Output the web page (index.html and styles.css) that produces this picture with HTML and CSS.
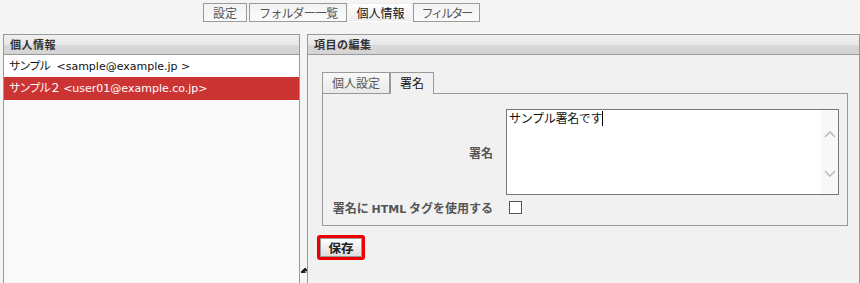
FILE: index.html
```html
<!DOCTYPE html>
<html lang="ja">
<head>
<meta charset="utf-8">
<title>個人情報</title>
<link rel="stylesheet" href="styles.css">
</head>
<body>
<nav class="topnav">
  <a class="ttab">設定</a>
  <a class="ttab kana">フォルダー一覧</a>
  <a class="ttab active">個人情報</a>
  <a class="ttab kana2">フィルター</a>
</nav>
<main class="main">
  <section class="panel left">
    <header class="phead">個人情報</header>
    <ul class="list">
      <li class="item"><span class="nm">サンプル</span>&nbsp; &lt;sample@example.jp &gt;</li>
      <li class="item sel"><span class="nm">サンプル２</span> &lt;user01@example.co.jp&gt;</li>
    </ul>
  </section>
  <div class="splitter">
    <svg class="grip" width="6" height="5" viewBox="0 0 6 5"><path d="M0 5V3h1V2h1V1h1V0h2v1h1v2H4v2z" fill="#222"/><path d="M4 3h2v2H4z" fill="#aaa"/></svg>
  </div>
  <section class="panel right">
    <header class="phead">項目の編集</header>
    <div class="pbody">
      <div class="itabs">
        <a class="itab">個人設定</a>
        <a class="itab active">署名</a>
      </div>
      <div class="ibox">
        <div class="form">
          <label class="lbl sig">署名</label>
          <div class="ta">
            <div class="ta-text">サンプル署名です<span class="caret"></span></div>
            <div class="ta-scroll">
              <svg width="12" height="8" viewBox="0 0 12 8"><path d="M1 7l5-5 5 5" fill="none" stroke="#bdbdbd" stroke-width="1.6"/></svg>
              <svg width="12" height="8" viewBox="0 0 12 8"><path d="M1 1l5 5 5-5" fill="none" stroke="#bdbdbd" stroke-width="1.6"/></svg>
            </div>
          </div>
          <label class="lbl">署名に <b class="html">HTML</b> タグを使用する</label>
          <div class="cbcell"><span class="cb"></span></div>
        </div>
      </div>
      <div class="savewrap"><button class="save">保存</button></div>
    </div>
  </section>
</main>
</body>
</html>
```
FILE: styles.css
```css
* { box-sizing: border-box; }
html, body { margin: 0; padding: 0; }
body {
  width: 860px;
  height: 283px;
  overflow: hidden;
  background: #f4f4f4;
  font-family: "DejaVu Sans", "Noto Sans CJK JP", sans-serif;
  font-size: 12px;
  color: #222;
}
.topnav {
  display: flex;
  gap: 2px;
  padding: 3px 0 0 203px;
  height: 34px;
}
.ttab {
  height: 19px;
  padding: 0 9px;
  border: 1px solid #9a9a9a;
  background: linear-gradient(#f2f2f2, #fbfbfb);
  color: #555;
  font-size: 12px;
  line-height: 17px;
  font-family: "Noto Sans CJK JP", sans-serif;
}
.ttab.kana { letter-spacing: -0.8px; }
.ttab.kana2 { letter-spacing: -2px; padding: 0 8px 0 7px; }
.ttab.active {
  border-color: transparent;
  background: linear-gradient(#ffffff, #ececec);
  color: #111;
  padding: 0 6px;
}
.main {
  display: flex;
  padding-left: 3px;
  height: 249px;
}
.panel {
  border: 1px solid #999;
  border-bottom: none;
  display: flex;
  flex-direction: column;
}
.left { width: 297px; background: #f9f9f9; }
.right { width: 553px; background: #f1f1f1; }
.phead {
  height: 20px;
  border-bottom: 1px solid #9a9a9a;
  background: linear-gradient(#f0f0f0 0, #e8e8e8 50%, #d8d8d8 55%, #d4d4d4 100%);
  font-family: "Noto Sans CJK JP", sans-serif;
  font-weight: bold;
  font-size: 11px;
  line-height: 19px;
  color: #333;
  padding-left: 6px;
  letter-spacing: 0.5px;
}
.list { list-style: none; margin: 0; padding: 0; }
.item {
  height: 22px;
  line-height: 22px;
  padding-left: 5px;
  background: #fff;
  font-size: 11px;
  color: #111;
}
.nm { letter-spacing: -1.3px; font-size: 11.5px; }
.item.sel { height: 23px; background: #cc3333; color: #fff; }
.splitter {
  width: 7px;
  display: flex;
  align-items: flex-end;
  justify-content: center;
  padding-bottom: 10px;
}
.pbody { padding: 16px 11px 0 14px; }
.itabs { display: flex; align-items: flex-end; height: 22px; }
.itab {
  height: 21px;
  padding: 0 9px;
  border: 1px solid #9a9a9a;
  border-bottom: none;
  background: linear-gradient(#f8f8f8, #eaeaea);
  color: #555;
  font-family: "Noto Sans CJK JP", sans-serif;
  font-size: 12px;
  line-height: 20px;
}
.itab.active {
  height: 22px;
  background: #f1f1f1;
  color: #111;
  position: relative;
  top: 1px;
  border-bottom: none;
  padding: 0 9px;
}
.ibox {
  border: 1px solid #999;
  height: 133px;
  padding: 15px 8px 0 0;
}
.form {
  display: grid;
  grid-template-columns: 170px 333px;
  column-gap: 13px;
  row-gap: 4px;
  align-items: center;
}
.lbl {
  text-align: right;
  font-family: "Noto Sans CJK JP", sans-serif;
  font-weight: bold;
  color: #555;
  font-size: 12px;
}
.html { font-family: "DejaVu Sans", sans-serif; font-size: 11px; }
.ta {
  height: 86px;
  border: 1px solid #777;
  background: #fff;
  display: flex;
}
.ta-text {
  flex: 1;
  padding: 0 2px;
  font-family: "Noto Sans CJK JP", sans-serif;
  font-size: 12px;
  letter-spacing: -0.3px;
  line-height: 16px;
  color: #111;
}
.caret {
  display: inline-block;
  width: 1px;
  height: 15px;
  background: #000;
  vertical-align: -3px;
}
.ta-scroll {
  width: 17px;
  background: #f8f8f8;
  display: flex;
  flex-direction: column;
  align-items: center;
  justify-content: space-between;
  padding: 20px 0 16px;
}
.cbcell { height: 17px; display: flex; align-items: center; }
.cb {
  width: 13px;
  height: 13px;
  border: 1px solid #555;
  background: #fff;
  margin-left: 3px;
}
.savewrap { padding-top: 9px; }
.save {
  width: 48px;
  height: 25px;
  border: 3px solid #ee0000;
  border-radius: 3px;
  box-shadow: inset 0 0 0 1px #999;
  background: linear-gradient(#ffffff, #dcdcdc);
  font-family: "Noto Sans CJK JP", sans-serif;
  font-weight: bold;
  font-size: 12.5px;
  line-height: 17px;
  color: #222;
  padding: 0;
  margin-left: -5px;
}
```
